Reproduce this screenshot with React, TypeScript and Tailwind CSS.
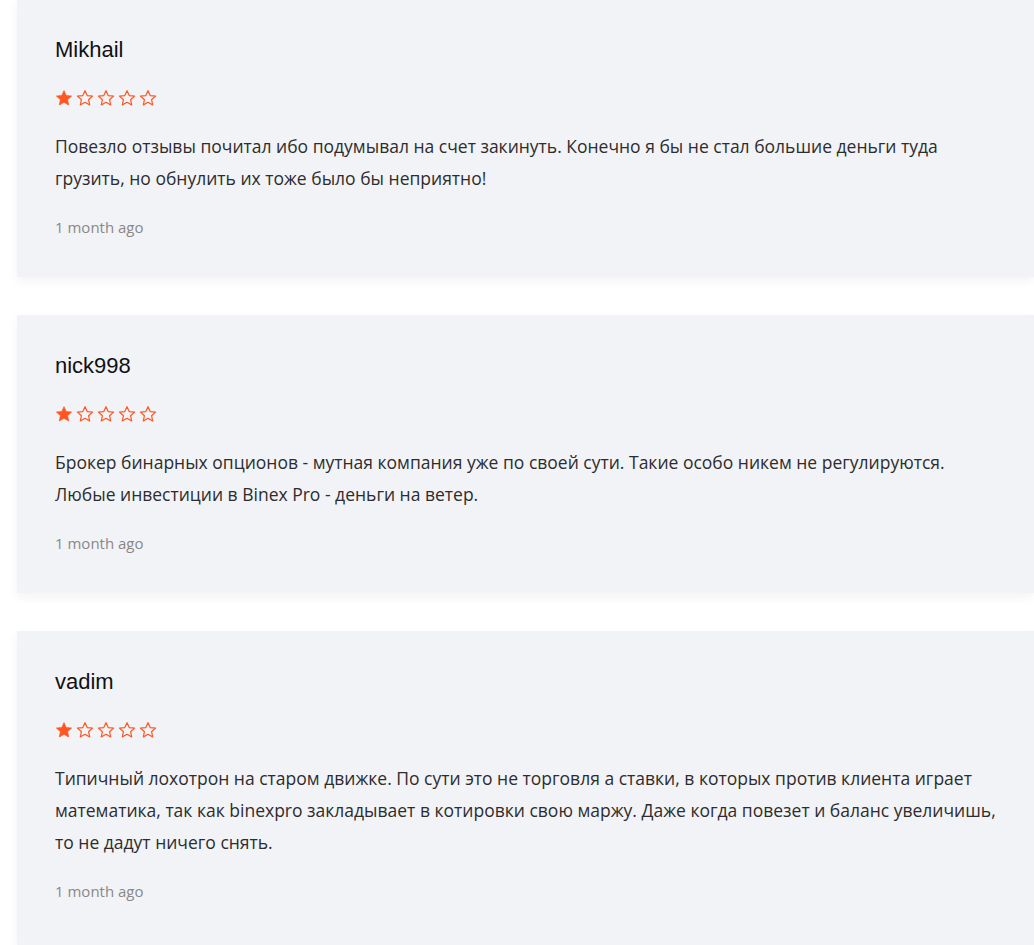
import React from 'react';

type Review = { name: string; rating: number; text: string; time: string };

const reviews: Review[] = [
    {
        name: 'Mikhail',
        rating: 1,
        text: 'Повезло отзывы почитал ибо подумывал на счет закинуть. Конечно я бы не стал большие деньги туда грузить, но обнулить их тоже было бы неприятно!',
        time: '1 month ago',
    },
    {
        name: 'nick998',
        rating: 1,
        text: 'Брокер бинарных опционов - мутная компания уже по своей сути. Такие особо никем не регулируются. Любые инвестиции в Binex Pro - деньги на ветер.',
        time: '1 month ago',
    },
    {
        name: 'vadim',
        rating: 1,
        text: 'Типичный лохотрон на старом движке. По сути это не торговля а ставки, в которых против клиента играет математика, так как binexpro закладывает в котировки свою маржу. Даже когда повезет и баланс увеличишь, то не дадут ничего снять.',
        time: '1 month ago',
    },
];

function Star({ filled }: { filled: boolean }) {
    return (
        <svg width="18" height="18" viewBox="0 0 24 24" className="shrink-0">
            <path
                d="M12 2.2l2.95 6.55 7.15.72-5.36 4.8 1.52 7.03L12 17.7l-6.26 3.6 1.52-7.03-5.36-4.8 7.15-.72z"
                fill={filled ? '#ff5722' : 'none'}
                stroke="#ff5722"
                strokeWidth={filled ? 1 : 1.6}
                strokeLinejoin="round"
            />
        </svg>
    );
}

function ReviewCard({ review }: { review: Review }) {
    return (
        <div className="bg-[#f2f3f7] pt-[37px] pb-[40px] pl-[38px] pr-[37px] shadow-[0_4px_10px_rgba(0,0,0,0.05)] last:flex-1">
            <h3 className="text-[22px] leading-[28px] text-[#111] font-['Liberation_Sans',Arial,sans-serif]">
                {review.name}
            </h3>
            <div className="mt-[25px] flex h-[18px] gap-[3px]">
                {[1, 2, 3, 4, 5].map((i) => (
                    <Star key={i} filled={i <= review.rating} />
                ))}
            </div>
            <p className="mt-[23px] text-[17.5px] leading-[32px] text-[#2d2d2d] font-['Open_Sans',sans-serif]">
                {review.text}
            </p>
            <p className="mt-[23px] text-[15px] leading-[20px] text-[#888] font-['Open_Sans',sans-serif]">
                {review.time}
            </p>
        </div>
    );
}

export default function App() {
    return (
        <div className="flex min-h-screen flex-col overflow-hidden bg-white">
            <div className="-mt-px flex flex-1 flex-col gap-[38px] pl-[17px]">
                {reviews.map((r) => (
                    <ReviewCard key={r.name} review={r} />
                ))}
            </div>
        </div>
    );
}
